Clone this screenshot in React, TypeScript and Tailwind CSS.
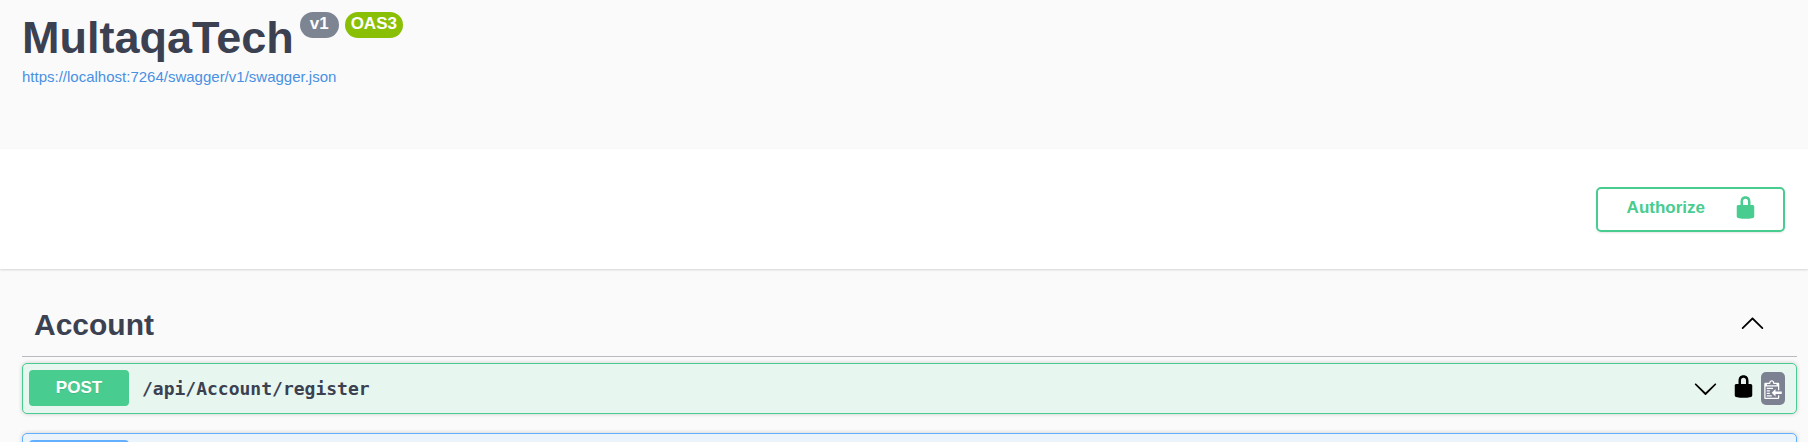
import { ReactNode } from 'react';

function LockIcon() {
  return (
    <svg className="size-[25px] shrink-0 fill-current" viewBox="0 0 20 20" aria-hidden="true">
      <path d="M15.8 8H14V5.6C14 2.703 12.665 1 10 1 7.334 1 6 2.703 6 5.6V8H4c-.553 0-1 .646-1 1.199V17c0 .549.428 1.139.951 1.307l1.197.387C5.672 18.861 6.55 19 7.1 19h5.8c.549 0 1.428-.139 1.951-.307l1.196-.387c.524-.167.953-.757.953-1.306V9.199C17 8.646 16.352 8 15.8 8zM12 8H8V5.199C8 3.754 8.797 3 10 3c1.203 0 2 .754 2 2.199V8z" />
    </svg>
  );
}

function ChevronUpIcon() {
  return (
    <svg className="size-[25px] shrink-0 fill-current" viewBox="0 0 20 20" aria-hidden="true">
      <path d="M17.418 14.908c.272.268.709.268.979 0s.271-.701 0-.969l-7.908-7.83c-.27-.268-.707-.268-.979 0l-7.908 7.83c-.27.268-.27.701 0 .969.271.268.709.268.979 0L10 7.767l7.418 7.141z" />
    </svg>
  );
}

function ChevronDownIcon() {
  return (
    <svg className="size-[25px] shrink-0 fill-current" viewBox="0 0 20 20" aria-hidden="true">
      <path d="M17.418 6.109c.272-.268.709-.268.979 0s.271.701 0 .969l-7.908 7.83c-.27.268-.707.268-.979 0l-7.908-7.83c-.27-.268-.27-.701 0-.969.271-.268.709-.268.979 0L10 13.25l7.418-7.141z" />
    </svg>
  );
}

function ClipboardIcon() {
  return (
    <svg className="h-5 w-[18px] shrink-0 fill-white" viewBox="0 0 14 16" aria-hidden="true">
      <path
        fillRule="evenodd"
        d="M2 13h4v1H2v-1zm5-6H2v1h5V7zm2 3V8l-3 3 3 3v-2h5v-2H9zM4.5 9H2v1h2.5V9zM2 12h2.5v-1H2v1zm9 1h1v2c-.02.28-.11.52-.3.7-.19.18-.42.28-.7.3H1c-.55 0-1-.45-1-1V4c0-.55.45-1 1-1h3c0-1.11.89-2 2-2 1.11 0 2 .89 2 2h3c.55 0 1 .45 1 1v5h-1V6H1v9h10v-2zM2 5h8c0-.55-.45-1-1-1H8c-.55 0-1-.45-1-1s-.45-1-1-1-1 .45-1 1-.45 1-1 1H3c-.55 0-1 .45-1 1z"
      />
    </svg>
  );
}

function Badge({ color, children }: { color: string; children: ReactNode }) {
  return (
    <span className={`flex h-[26px] items-center rounded-full pb-0.5 text-[17px] leading-6 font-bold text-white ${color}`}>
      {children}
    </span>
  );
}

function Operation({ method, path, box, badge }: { method?: string; path?: string; box: string; badge: string }) {
  return (
    <div className={`flex items-center rounded-[5px] border pt-1.5 pb-[7px] pr-[11px] pl-1.5 shadow-[0_0_4px_rgba(0,0,0,0.19)] ${box}`}>
      <button type="button" className="flex min-w-0 flex-1 items-center gap-[13px] text-left">
        <span className={`h-9 w-[100px] rounded-[4px] pt-1.5 text-center text-[17px] leading-6 font-bold text-white [text-shadow:0_1px_0_rgba(0,0,0,0.1)] ${badge}`}>
          {method}
        </span>
        <span className="pt-0.5 font-['DejaVu_Sans_Mono',monospace] text-lg leading-7 font-bold">{path}</span>
      </button>
      <div className="flex items-center pt-px text-black">
        <button type="button" aria-label="Expand operation" className="mr-[13px]">
          <ChevronDownIcon />
        </button>
        <button type="button" aria-label="Authorize operation" className="mr-[5px] pb-1">
          <LockIcon />
        </button>
        <button
          type="button"
          aria-label="Copy path to clipboard"
          className="flex h-[33px] w-6 items-center justify-center rounded-[5px] bg-[#7d8293]"
        >
          <ClipboardIcon />
        </button>
      </div>
    </div>
  );
}

export default function App() {
  return (
    <div className="h-screen overflow-hidden bg-[#fafafa] font-['Liberation_Sans',Arial,sans-serif] text-[#3b4151]">
      <header className="px-[22px] pt-3 pb-[62px]">
        <div className="flex items-start gap-1.5">
          <h1 className="text-[45px] leading-[52px] font-bold">MultaqaTech</h1>
          <Badge color="bg-[#7d8492] px-[10px]">v1</Badge>
          <Badge color="bg-[#89bf04] px-[6px]">OAS3</Badge>
        </div>
        <a
          href="https://localhost:7264/swagger/v1/swagger.json"
          className="block w-fit pt-0.5 text-[15px] leading-[21px] text-[#4990e2]"
        >
          https://localhost:7264/swagger/v1/swagger.json
        </a>
      </header>

      <section className="flex justify-end bg-white pt-[38px] pr-[23px] pb-[37px] shadow-[0_1px_2px_rgba(0,0,0,0.15)]">
        <button
          type="button"
          className="flex h-[45px] items-center rounded-[5px] border-2 border-[#49cc90] pr-[25px] pl-[29px] text-[17px] font-bold text-[#49cc90] shadow-[0_1px_2px_rgba(0,0,0,0.1)]"
        >
          <span className="pr-7 pb-[3px]">Authorize</span>
          <span className="pb-1">
            <LockIcon />
          </span>
        </button>
      </section>

      <main className="pt-[25px] pr-[11px] pl-[22px]">
        <h2 className="border-b border-[#3b4151]/35">
          <button type="button" className="flex w-full items-center justify-between pt-1.5 pr-8 pb-1.5 pl-3 text-left text-[30px] leading-[50px] font-bold">
            Account
            <span className="pb-1.5 text-black">
              <ChevronUpIcon />
            </span>
          </button>
        </h2>
        <div className="flex flex-col gap-[19px] pt-1.5">
          <Operation
            method="POST"
            path="/api/Account/register"
            box="border-[#49cc90] bg-[#e8f6f0]"
            badge="bg-[#49cc90]"
          />
          <Operation box="border-[#61affe] bg-[#ebf3fb]" badge="bg-[#61affe]" />
        </div>
      </main>
    </div>
  );
}
